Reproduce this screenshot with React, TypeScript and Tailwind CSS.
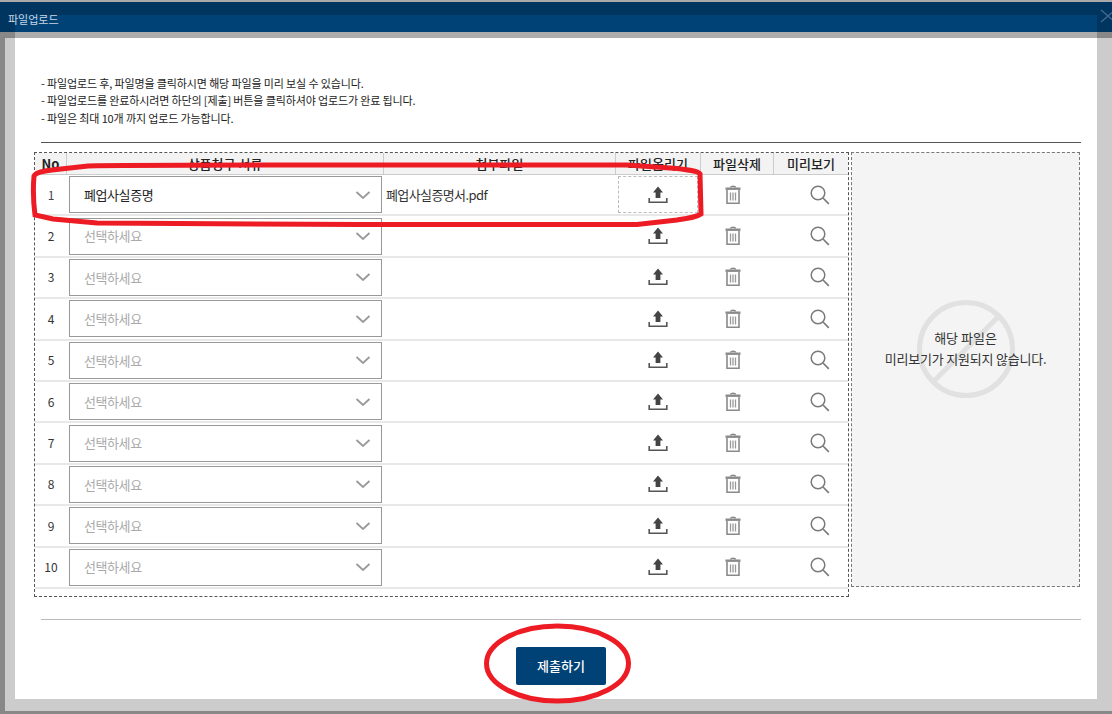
const FONT = "font-['Malgun_Gothic','Noto_Sans_CJK_KR','Liberation_Sans',sans-serif]";

function UploadIcon() {
  return (
    <svg width="20" height="20" viewBox="0 0 20 20" fill="none">
      <path d="M10 1.5 L15 7.5 H12.4 V13 H7.6 V7.5 H5 Z" fill="#444" />
      <path d="M1.2 13 V17.3 H18.8 V13" stroke="#555" strokeWidth="1.6" />
    </svg>
  );
}

function TrashIcon() {
  return (
    <svg width="16" height="20" viewBox="0 0 16 20" fill="none">
      <path d="M5.5 2.5 C5.5 0.8 10.5 0.8 10.5 2.5" stroke="#8a8a8a" strokeWidth="1.3" />
      <rect x="0.5" y="2.5" width="15" height="2.4" fill="#8a8a8a" />
      <path d="M2 5 V18.3 H14 V5" stroke="#8a8a8a" strokeWidth="1.6" />
      <path d="M5.5 7.5 V15.5 M8 7.5 V15.5 M10.5 7.5 V15.5" stroke="#9a9a9a" strokeWidth="1.3" />
    </svg>
  );
}

function SearchIcon() {
  return (
    <svg width="20" height="20" viewBox="0 0 20 20" fill="none">
      <circle cx="8" cy="8" r="6.8" stroke="#7a7a7a" strokeWidth="1.5" />
      <path d="M13 13 L18.8 18.8" stroke="#7a7a7a" strokeWidth="1.7" />
    </svg>
  );
}

function Chevron() {
  return (
    <svg width="16" height="8" viewBox="0 0 16 8" fill="none">
      <path d="M1.5 1 L8 7 L14.5 1" stroke="#9a9a9a" strokeWidth="1.8" />
    </svg>
  );
}

const rows = [1, 2, 3, 4, 5, 6, 7, 8, 9, 10];

function Row({ n }: { n: number }) {
  const first = n === 1;
  return (
    <div className="flex h-[41.4px] border-b-2 border-[#e8e8e8]">
      <div className={`w-[32px] flex items-center justify-center text-[12px] ${n === 1 ? "text-[#445]" : "text-[#333]"}`}>{n}</div>
      <div className="w-[317px] flex items-center pl-[2px] pr-[2px]">
        <div className="w-[313px] h-[37px] border border-[#999] flex items-center justify-between pl-[14px] pr-[10px]">
          <span className={`text-[13px] tracking-[-0.4px] ${first ? "text-[#222]" : "text-[#aaa]"}`}>{first ? "폐업사실증명" : "선택하세요"}</span>
          <Chevron />
        </div>
      </div>
      <div className="w-[232px] flex items-center pl-[2px] text-[13px] tracking-[-0.6px] text-[#333]">
        {first ? "폐업사실증명서.pdf" : ""}
      </div>
      <div className="w-[85px] flex items-center justify-center">
        {first ? (
          <div className="w-[80px] h-[37px] border border-dashed border-[#bbb] flex items-center justify-center">
            <UploadIcon />
          </div>
        ) : (
          <UploadIcon />
        )}
      </div>
      <div className="w-[73px] flex items-center justify-center pr-[8px]">
        <TrashIcon />
      </div>
      <div className="w-[75px] flex items-center justify-center pl-[19px]">
        <SearchIcon />
      </div>
    </div>
  );
}

function Head({ w, text, bold }: { w: string; text: string; bold?: boolean }) {
  return (
    <div className={`${w} flex items-center justify-center border-r border-[#ccc] text-[13px] text-[#222] ${bold ? "font-bold" : "font-medium"}`}>
      {text}
    </div>
  );
}

export default function App() {
  return (
    <div className={`relative w-[1112px] h-[714px] overflow-hidden flex flex-col bg-[#888888] ${FONT}`}>
      <div className="h-[2px] bg-[#aaaaaa]" />
      <div className="h-[30px] bg-[#00355f] pt-[13px] pl-[15px] pr-[15px] relative">
        <div className="h-[17px] bg-[#004276]" />
        <span className="absolute left-[8px] top-[9px] text-[11px] leading-[16px] text-[#c9d6e2]">파일업로드</span>
        <svg className="absolute right-[0px] top-[7px]" width="12" height="14" viewBox="0 0 12 14" fill="none">
          <path d="M1 1 L8 7 L1 13" stroke="#3f6a90" strokeWidth="1.4" />
          <path d="M8 7 L12 3.5 M8 7 L12 10.5" stroke="#3f6a90" strokeWidth="1.4" />
        </svg>
      </div>
      <div className="flex h-[6px]">
        <div className="w-[15px] bg-[#888888]" />
        <div className="w-[1082px] bg-[#adadad]" />
        <div className="w-[15px] bg-[#888888]" />
      </div>
      <div className="flex-1 pl-[5px] pb-[3px] flex flex-col">
        <div className="flex-1 bg-[#cccccc] pl-[10px] pr-[15px] pb-[12px] flex flex-col">
          <main className="flex-1 bg-white pl-[26px] pr-[16px] flex flex-col">
            <div className="pt-[37px] h-[104px] text-[11px] leading-[17.3px] text-[#222] tracking-[-0.13px]">
              <p>- 파일업로드 후, 파일명을 클릭하시면 해당 파일을 미리 보실 수 있습니다.</p>
              <p>- 파일업로드를 완료하시려면 하단의 [제출] 버튼을 클릭하셔야 업로드가 완료 됩니다.</p>
              <p>- 파일은 최대 10개 까지 업로드 가능합니다.</p>
            </div>
            <div className="h-px bg-[#555]" />
            <div className="flex gap-[2px] -ml-[7px] mt-[9px]">
              <div className="w-[815px] h-[445px] border border-dashed border-[#555] pb-[7px]">
                <div className="flex h-[22px] bg-[#f3f3f3] border-b border-[#ccc]">
                  <Head w="w-[32px]" text="No" bold />
                  <Head w="w-[317px]" text="상품청구 서류" />
                  <Head w="w-[232px]" text="첨부파일" />
                  <Head w="w-[85px]" text="파일올리기" />
                  <Head w="w-[73px]" text="파일삭제" />
                  <div className="w-[74px] flex items-center justify-center text-[13px] font-medium text-[#222]">미리보기</div>
                </div>
                {rows.map((n) => (
                  <Row key={n} n={n} />
                ))}
              </div>
              <div className="relative w-[229px] h-[435px] border border-dashed border-[#777] bg-[#f4f4f4] flex flex-col items-center justify-center pb-[44px] text-[13px] leading-[21px] text-[#333]">
                <svg className="absolute left-[65px] top-[147px]" width="98" height="98" viewBox="0 0 98 98" fill="none">
                  <circle cx="49" cy="49" r="46.5" stroke="#e1e1e1" strokeWidth="5" />
                  <path d="M82 16 L16 82" stroke="#e1e1e1" strokeWidth="5" />
                </svg>
                <p className="relative">해당 파일은</p>
                <p className="relative tracking-[-0.2px]">미리보기가 지원되지 않습니다.</p>
              </div>
            </div>
            <div className="h-px bg-[#bbb] mt-[22px]" />
            <div className="flex-1 flex items-start justify-center pt-[27px]">
              <button className="w-[90px] h-[38px] bg-[#004276] rounded-[2px] text-white text-[13px] font-medium">제출하기</button>
            </div>
          </main>
        </div>
      </div>
      <svg className="absolute inset-0 pointer-events-none" width="1112" height="714" viewBox="0 0 1112 714" fill="none">
        <path
          d="M35 215 C33 200 33 188 34 176 C36 172 44 171 52 170 L88 166 C100 165 200 165 380 165 L627 165 L677 168.5 C690 170 698 171 700 174 L701 214 C697 217 690 218 677 220 L637 224.5 L360 224.5 L97 223 L53 219 Z"
          stroke="#ed1c24"
          strokeWidth="5"
        />
        <ellipse cx="557.5" cy="663.5" rx="71" ry="37.5" stroke="#ed1c24" strokeWidth="5" />
      </svg>
    </div>
  );
}
